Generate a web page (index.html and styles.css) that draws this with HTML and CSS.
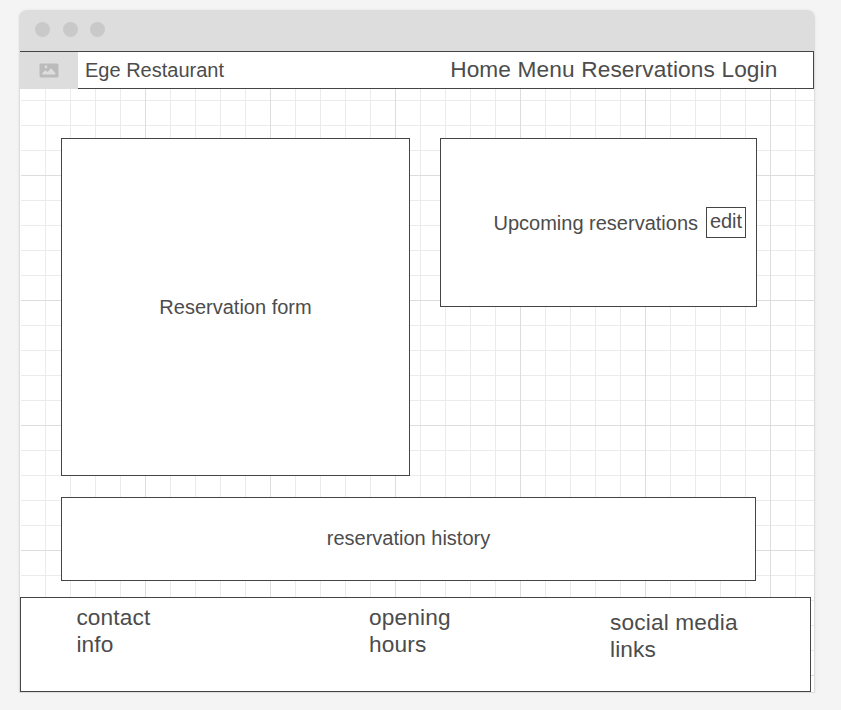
FILE: index.html
```html
<!DOCTYPE html>
<html lang="en">
<head>
<meta charset="utf-8">
<title>Ege Restaurant</title>
<link rel="stylesheet" href="styles.css">
</head>
<body>
<div class="window">
  <div class="titlebar"><span class="dot"></span><span class="dot"></span><span class="dot"></span></div>
  <div class="canvas">
    <header class="header">
      <div class="logo">
        <svg width="20" height="15" viewBox="0 0 20 15"><rect x=".5" y=".5" width="19" height="14" rx="1.5" fill="#bbb"/><path d="M3.3 11.5V10.2L6.2 7.2 8.6 9 12 5.2 16.3 9.8V11.5Z" fill="#ddd"/><circle cx="7" cy="3.9" r="1.4" fill="#ddd"/></svg>
      </div>
      <div class="brand">Ege Restaurant</div>
      <nav class="nav"><a>Home</a> <a>Menu</a> <a>Reservations</a> <a>Login</a></nav>
    </header>
    <main class="main">
      <div class="row">
        <section class="box form">Reservation form</section>
        <section class="box upcoming"><span>Upcoming reservations</span><button class="edit">edit</button></section>
      </div>
      <section class="box history">reservation history</section>
    </main>
    <footer class="footer">
      <div class="contact">contact<br>info</div>
      <div class="hours">opening<br>hours</div>
      <div class="social">social media<br>links</div>
    </footer>
  </div>
</div>
</body>
</html>
```
FILE: styles.css
```css
* { box-sizing: border-box; }
body {
  margin: 0;
  padding: 10px 0 0 19px;
  background: #f4f4f4;
  color: #4c4c4c;
  font: 20px/24px "Liberation Sans", Arial, sans-serif;
}
.window {
  width: 796px;
  height: 683px;
  border-radius: 8px 8px 0 0;
  box-shadow: 0 0 3px rgba(0, 0, 0, .08);
}
.titlebar {
  display: flex;
  gap: 12.5px;
  height: 41px;
  padding: 12px 0 0 16px;
  background: #ddd;
  border-radius: 8px 8px 0 0;
}
.dot { width: 15px; height: 15px; border-radius: 50%; background: #c9c9c9; }
.canvas {
  height: 642px;
  border: 1px solid #ddd;
  border-top: 0;
  box-shadow: inset 1px 0 #fff;
  background-color: #fff;
  background-image:
    linear-gradient(90deg, #ddd 1px, transparent 1px),
    linear-gradient(#ddd 1px, transparent 1px),
    linear-gradient(90deg, #ebebeb 1px, transparent 1px),
    linear-gradient(#ebebeb 1px, transparent 1px);
  background-size: 125px 100%, 100% 125px, 25px 100%, 100% 25px;
  background-position: 125px 0, 0 124px, 0 0, 0 24px;
}
.header {
  display: flex;
  width: 794px;
  height: 38px;
  background: #fff;
  border: 1px solid #444;
  border-left: 0;
}
.logo {
  display: flex;
  align-items: center;
  justify-content: center;
  width: 59px;
  height: 37px;
  margin-left: -1px;
  background: #ddd;
}
.brand { padding: 6px 0 0 7px; white-space: nowrap; }
.nav {
  margin-left: auto;
  padding: 4px 35.5px 0 0;
  font-size: 22.67px;
  line-height: 27px;
  letter-spacing: .13px;
  white-space: nowrap;
}
.main { height: 508px; padding: 49px 0 0 41px; }
.row { display: flex; align-items: flex-start; gap: 30px; height: 359px; }
.box {
  display: flex;
  align-items: center;
  justify-content: center;
  background: #fff;
  border: 1px solid #444;
}
.form { width: 349px; height: 338px; }
.upcoming { width: 317px; height: 169px; justify-content: flex-end; padding-right: 10px; }
.edit {
  width: 40px;
  height: 31px;
  margin: 0 0 0 8px;
  padding: 0 0 3px;
  background: #fff;
  border: 1px solid #444;
  color: inherit;
  font: inherit;
}
.history { width: 695px; height: 84px; padding-bottom: 2px; }
.footer {
  display: flex;
  width: 791px;
  height: 95px;
  padding-top: 6px;
  background: #fff;
  border: 1px solid #444;
  font-size: 22.67px;
  line-height: 27px;
  letter-spacing: .15px;
}
.contact { width: 348px; padding-left: 55.4px; }
.hours { width: 241px; }
.social { padding-top: 5px; }
```
